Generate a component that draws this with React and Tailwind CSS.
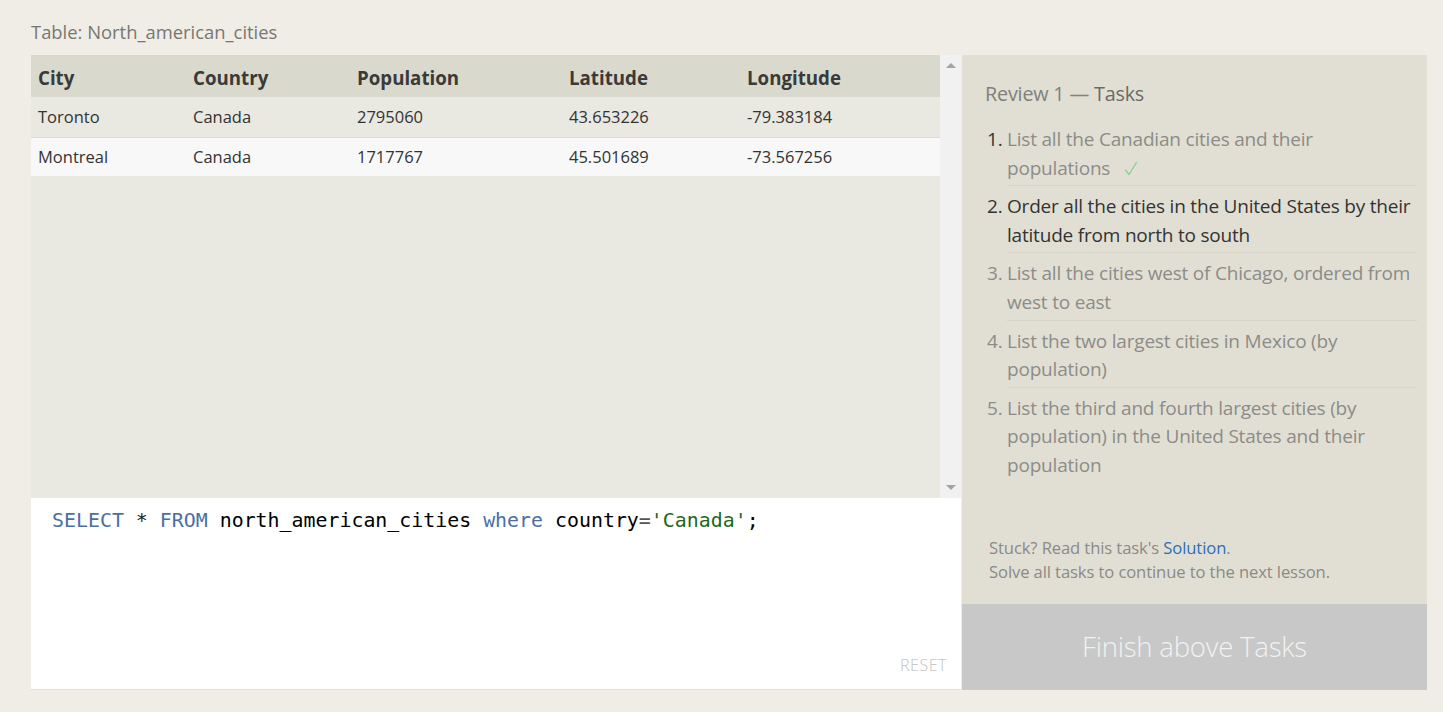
import React from "react";

const font = { fontFamily: '"Open Sans", "Noto Sans", sans-serif' };

const rows = [
  ["Toronto", "Canada", "2795060", "43.653226", "-79.383184"],
  ["Montreal", "Canada", "1717767", "45.501689", "-73.567256"],
];
const cols = ["City", "Country", "Population", "Latitude", "Longitude"];
const widths = ["w-[155px]", "w-[164px]", "w-[212px]", "w-[178px]", "w-auto"];

const tasks = [
  { n: "1.", text: "List all the Canadian cities and their populations", done: true },
  { n: "2.", text: "Order all the cities in the United States by their latitude from  north to south", active: true },
  { n: "3.", text: "List all the cities west of Chicago, ordered from west to east" },
  { n: "4.", text: "List the two largest cities in Mexico (by population)" },
  { n: "5.", text: "List the third and fourth largest cities (by population) in the United States and their population" },
];

export default function App() {
  return (
    <div className="min-h-[712px] w-[1443px] bg-[#efede6] pl-[31px] pr-[16px] pt-[20px]" style={font}>
      <div className="h-[35px] text-[18.4px] leading-[24px] text-[#777772]">Table: North_american_cities</div>
      <div className="flex h-[635px]">
        {/* Left */}
        <div className="flex w-[930px] flex-col">
          <div className="flex h-[443px] bg-[#e9e8e1]">
            <div className="flex-1">
              <table className="w-full border-collapse text-left text-[#333]">
                <thead>
                  <tr className="h-[42px] bg-[#d9d9cd]">
                    {cols.map((c, i) => (
                      <th key={c} className={`${widths[i]} pl-[7px] pt-[4px] text-[18.7px] font-bold text-[#3a3a38]`}>{c}</th>
                    ))}
                  </tr>
                </thead>
                <tbody>
                  {rows.map((r, ri) => (
                    <tr key={ri} className={ri === 0 ? "h-[40px] border-b border-[#dcdcd6] bg-[#e9e8e1]" : "h-[39px] bg-[#f8f8f8]"}>
                      {r.map((c, i) => (
                        <td key={i} className="pl-[7px] pt-[2px] text-[16.5px] font-normal text-[#333]">{c}</td>
                      ))}
                    </tr>
                  ))}
                </tbody>
              </table>
            </div>
            <div className="flex w-[21px] flex-col justify-between bg-[#f1f1f1] py-[8px]">
              <div className="mx-auto h-0 w-0 border-x-[5px] border-b-[5px] border-x-transparent border-b-[#a3a3a3]" />
              <div className="mx-auto h-0 w-0 border-x-[5px] border-t-[5px] border-x-transparent border-t-[#a3a3a3]" />
            </div>
          </div>
          <div className="relative flex-1 bg-white border-b border-[#e2e2dc] pl-[21px] pt-[10px]">
            <div className="leading-[26px] whitespace-pre" style={{ fontFamily: '"DejaVu Sans Mono", "Liberation Mono", monospace', fontSize: "19.9px" }}>
              <span className="text-[#4a6fa5]">SELECT</span>
              <span className="text-[#222]"> * </span>
              <span className="text-[#4a6fa5]">FROM</span>
              <span className="text-black"> north_american_cities </span>
              <span className="text-[#4a6fa5]">where</span>
              <span className="text-black"> country</span>
              <span className="text-[#555]">=</span>
              <span className="text-[#1a6a1a]">'Canada'</span>
              <span className="text-black">;</span>
            </div>
            <div className="absolute bottom-[12px] right-[14px] text-[16px] tracking-[0.5px] text-[#c8c8c8]" style={{ fontFamily: '"Noto Sans", sans-serif', fontWeight: 300 }}>RESET</div>
          </div>
        </div>
        {/* Right */}
        <div className="ml-[1px] flex w-[465px] flex-col bg-[#e1dfd4]">
          <div className="flex-1 pl-[23px] pr-[10px] pt-[25px]">
            <div className="text-[19.8px] leading-[28px] tracking-[-0.2px]">
              <span className="text-[#80807c]">Review 1 — </span>
              <span className="text-[#6a6a68]">Tasks</span>
            </div>
            <ol className="mt-[17px]">
              {tasks.map((t, i) => (
                <li key={i} className="flex text-[19px] leading-[28.6px] tracking-[-0.2px]">
                  <span className={`w-[22px] shrink-0 pl-[2px] ${t.done || t.active ? "text-[#333]" : "text-[#8c8c88]"}`}>{t.n}</span>
                  <div className={`flex-1 pb-[3px] ${i < tasks.length - 1 ? "border-b border-[#d6d4c9] mb-[6px]" : ""}`}>
                    <span className={t.active ? "text-[#333]" : "text-[#8c8c88]"}>{t.text}</span>
                    {t.done && (
                      <svg className="ml-[14px] inline-block align-[-1px]" width="14" height="15" viewBox="0 0 14 15" fill="none">
                        <path d="M1.5 9 L5 13.5 L12.5 1.5" stroke="#8fcf8f" strokeWidth="1.3" strokeLinecap="round" strokeLinejoin="round" />
                      </svg>
                    )}
                  </div>
                </li>
              ))}
            </ol>
          </div>
          <div className="pb-[20px] pl-[27px] text-[16.6px] leading-[24px] text-[#8a8a86] tracking-[-0.1px]">
            <div>Stuck? Read this task's <span className="text-[#2f6db5]">Solution</span>.</div>
            <div>Solve all tasks to continue to the next lesson.</div>
          </div>
          <div className="flex h-[86px] items-center justify-center bg-[#c8c8c8] text-[27.5px] font-light text-[#f2f2f2] tracking-[-0.2px]">
            Finish above Tasks
          </div>
        </div>
      </div>
    </div>
  );
}
